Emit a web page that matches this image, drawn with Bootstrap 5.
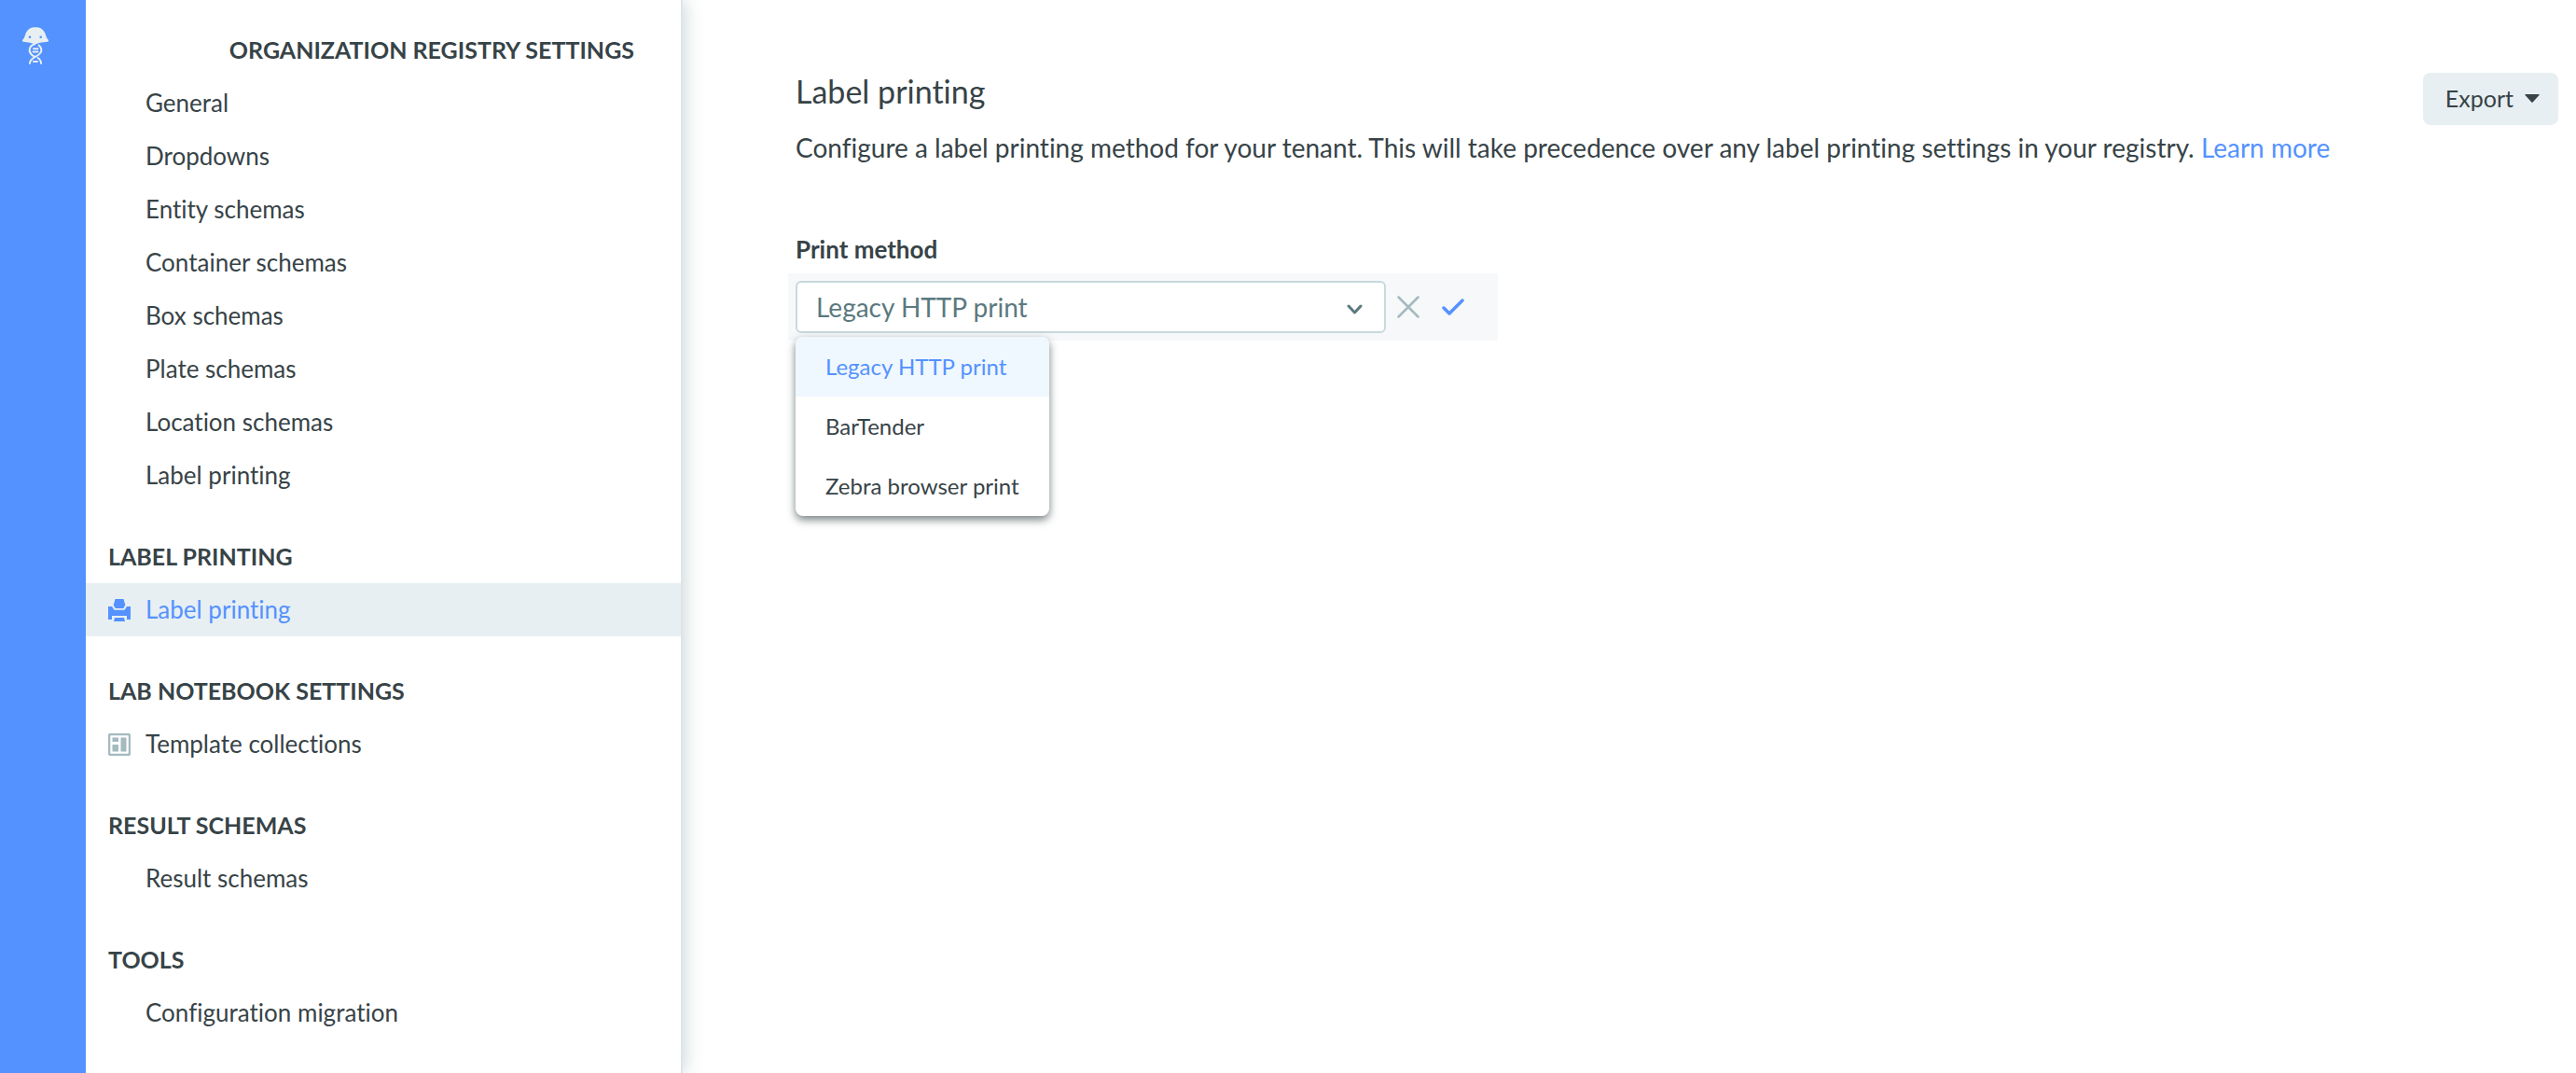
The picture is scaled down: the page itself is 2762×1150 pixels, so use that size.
<!DOCTYPE html>
<html lang="en">
<head>
<meta charset="utf-8">
<meta name="viewport" content="width=device-width, initial-scale=1">
<title>Label printing</title>
<link href="https://cdn.jsdelivr.net/npm/bootstrap@5.3.0/dist/css/bootstrap.min.css" rel="stylesheet">
<style>
  :root { --ink: #374347; --brand: #5492ff; --tint: #e7eff2; --slate: #5b7980; --muted: #a4babf; --line: #c8d9dc; }
  body { font-family: Lato, "Open Sans", sans-serif; font-size: 26px; font-variant-ligatures: none; color: var(--ink); background: #fff; }
  a { text-decoration: none; color: var(--brand); }

  .brand-rail { z-index: 1; width: 92px; background: var(--brand); padding: 28px 0 0 23px; }
  .brand-rail svg { display: block; }

  .side-panel { width: 640px; padding-top: 24px; background: #fff; border-right: 2px solid #dbe6ea; box-shadow: 0 0 20px rgba(55, 90, 96, .3); }
  .side-group { margin-bottom: 29px; }
  .side-title { margin: 0; padding: 0 50px 0 24px; font-size: 25px; font-weight: 700; line-height: 58px; text-transform: uppercase; }
  .side-link { padding-left: 24px; line-height: 57px; color: var(--ink); }
  .side-link.active { background: var(--tint); color: var(--brand); }
  .side-icon { width: 40px; color: var(--muted); }
  .side-link.active .side-icon { color: var(--brand); }

  .page-main { padding: 78px 19px 40px 121px; }
  .page-title { margin: 0 0 20px; font-size: 34px; font-weight: 400; line-height: 40px; }
  .page-text { margin: 0; font-size: 28px; line-height: 40px; }
  .export-btn { height: 56px; padding: 0 20px 0 24px; gap: 12px; font-size: 25px; color: var(--ink); background: var(--tint); border: 0; border-radius: 8px; }
  .export-btn:hover { background: var(--line); }

  .print-form { margin-top: 71px; }
  .field-label { margin-bottom: 8px; font-weight: 700; line-height: 36px; }
  .edit-band { width: 761px; max-width: 100%; margin-left: -8px; padding: 8px; background: #f6f8fa; }
  .method-field { width: 633px; }
  .method-select { height: 56px; padding: 0 48px 0 20px; font-size: 28px; line-height: 40px; color: var(--slate); background: #fff; border: 2px solid var(--line); border-radius: 6px; }
  .method-chevron { right: 25px; top: 25px; pointer-events: none; }
  .method-menu { display: block; top: 60px; left: 0; min-width: 271px; padding: 0; overflow: hidden; border: 0; border-radius: 8px; box-shadow: 0 4px 10px rgba(30, 45, 45, .6); }
  .method-menu .dropdown-item { padding: 0 32px; font-size: 24px; line-height: 64px; color: var(--ink); }
  .method-menu .dropdown-item.active { color: var(--brand); background: #eff7ff; }
  .icon-btn { width: 48px; height: 48px; }
</style>
<script src="https://cdn.jsdelivr.net/npm/bootstrap@5.3.0/dist/js/bootstrap.bundle.min.js" defer></script>
</head>
<body>
<div class="d-flex min-vh-100">
  <header class="brand-rail flex-shrink-0">
    <a href="#" aria-label="Home">
      <svg width="30" height="42" viewBox="0 0 30 42" fill="none" stroke="#e7eff2" stroke-width="2" stroke-linecap="round">
        <path d="M1 15C3 13 3.500 11 4.500 8C6.500 3 10 1.200 15 1.200S23.500 3 25.500 8C26.500 11 27 13 29 15Q29.500 16.500 28 16.800L20 17.800L15 19.500L9 17.800L2 16.800Q.5 16.500 1 15Z" fill="#e7eff2" stroke="none"/>
        <circle cx="9" cy="11.700" r="1.300" fill="#5492ff" stroke="none"/><circle cx="20.700" cy="11.700" r="1.300" fill="#5492ff" stroke="none"/>
        <path d="M18.500 20.500C21 22.500 22 24.500 21 27.500C19 33 9 33 9 40M14 19.500C8 21 7.500 27 10.500 30.200C11.500 31.200 12.500 31.800 13.500 32.300M17.500 34C20 35.500 21 37 21 40"/>
        <path d="M13 24.200H17.500M12.500 27.500H17.500M13 38H17"/>
      </svg>
    </a>
  </header>

  <nav class="side-panel flex-shrink-0" aria-label="Settings">
    <section class="side-group">
      <h2 class="side-title text-end">Organization registry settings</h2>
      <a class="side-link d-flex" href="#"><span class="side-icon"></span>General</a>
      <a class="side-link d-flex" href="#"><span class="side-icon"></span>Dropdowns</a>
      <a class="side-link d-flex" href="#"><span class="side-icon"></span>Entity schemas</a>
      <a class="side-link d-flex" href="#"><span class="side-icon"></span>Container schemas</a>
      <a class="side-link d-flex" href="#"><span class="side-icon"></span>Box schemas</a>
      <a class="side-link d-flex" href="#"><span class="side-icon"></span>Plate schemas</a>
      <a class="side-link d-flex" href="#"><span class="side-icon"></span>Location schemas</a>
      <a class="side-link d-flex" href="#"><span class="side-icon"></span>Label printing</a>
    </section>
    <section class="side-group">
      <h2 class="side-title">Label printing</h2>
      <a class="side-link active d-flex" href="#" aria-current="page"><span class="side-icon d-flex align-items-center">
        <svg width="24" height="24" viewBox="0 0 24 24" fill="currentColor" aria-hidden="true"><path d="M7.500 0h9l1.800 6.500-2 3.500H7.700l-2-3.500zM0 8h4l2.500 3.800h11L20 8h4v14h-4v-4H4v4H0zM7 20h10l1 4H6z"/></svg></span>Label printing</a>
    </section>
    <section class="side-group">
      <h2 class="side-title">Lab notebook settings</h2>
      <a class="side-link d-flex" href="#"><span class="side-icon d-flex align-items-center">
        <svg width="24" height="24" viewBox="0 0 24 24" fill="currentColor" aria-hidden="true"><rect x="1" y="1" width="22" height="22" rx="2" fill="none" stroke="currentColor" stroke-width="2.500"/><path d="M4.500 4.500h6.500v4.500H4.500zM4.500 12H11v7.500H4.500zM13.500 4.500h6v15h-6z"/></svg></span>Template collections</a>
    </section>
    <section class="side-group">
      <h2 class="side-title">Result schemas</h2>
      <a class="side-link d-flex" href="#"><span class="side-icon"></span>Result schemas</a>
    </section>
    <section>
      <h2 class="side-title">Tools</h2>
      <a class="side-link d-flex" href="#"><span class="side-icon"></span>Configuration migration</a>
    </section>
  </nav>

  <main class="page-main flex-grow-1">
    <div class="d-flex justify-content-between align-items-start">
      <div>
        <h1 class="page-title">Label printing</h1>
        <p class="page-text">Configure a label printing method for your tenant. This will take precedence over any label printing settings in your registry. <a href="#">Learn more</a></p>
      </div>
      <button type="button" class="export-btn btn d-flex align-items-center">Export
        <svg width="16" height="10" viewBox="0 0 16 10" fill="currentColor" aria-hidden="true"><path d="M1 0h14q1 0 .5 1L8.700 8.600q-.7.800-1.400 0L.5 1Q0 0 1 0z"/></svg>
      </button>
    </div>

    <form class="print-form">
      <label class="field-label d-block" for="print-method">Print method</label>
      <div class="edit-band d-flex align-items-center">
        <div class="method-field position-relative">
          <select class="method-select w-100 form-select" id="print-method">
            <option selected>Legacy HTTP print</option>
            <option>BarTender</option>
            <option>Zebra browser print</option>
          </select>
          <svg class="method-chevron position-absolute" width="17" height="12" viewBox="0 0 17 12" fill="none" stroke="#5b7980" stroke-width="3" stroke-linecap="round" stroke-linejoin="round" aria-hidden="true"><path d="M2 2l6.500 7L15 2"/></svg>
          <div class="method-menu dropdown-menu">
            <a class="dropdown-item active" href="#">Legacy HTTP print</a>
            <a class="dropdown-item" href="#">BarTender</a>
            <a class="dropdown-item" href="#">Zebra browser print</a>
          </div>
        </div>
        <button type="button" class="icon-btn btn p-0 border-0 d-flex align-items-center justify-content-center" aria-label="Cancel">
          <svg width="24" height="24" viewBox="0 0 24 24" fill="none" stroke="#a4babf" stroke-width="2.500" stroke-linecap="round"><path d="M1.500 1.500l21 21M22.500 1.500l-21 21"/></svg>
        </button>
        <button type="submit" class="icon-btn btn p-0 border-0 d-flex align-items-center justify-content-center" aria-label="Save">
          <svg width="24" height="18" viewBox="0 0 24 18" fill="none" stroke="#5492ff" stroke-width="3.500" stroke-linecap="round" stroke-linejoin="round"><path d="M2 10l6 6L22 2"/></svg>
        </button>
      </div>
    </form>
  </main>
</div>
</body>
</html>
